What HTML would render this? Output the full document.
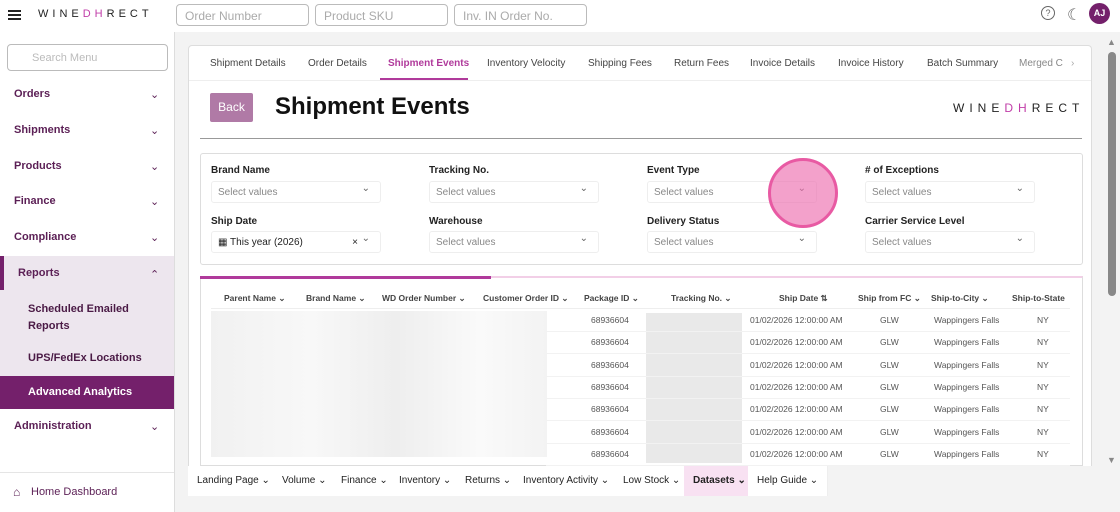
<!DOCTYPE html><html><head><style>
*{box-sizing:border-box;margin:0;padding:0}
body{width:1120px;height:512px;overflow:hidden;font-family:"Liberation Sans",sans-serif;background:#f3f3f3;position:relative;color:#333}
.a{position:absolute}
.top{left:0;top:0;width:1120px;height:32px;background:#fff}
.inp{top:4px;height:22px;border:1px solid #bbb;border-radius:4px;color:#aaa;font-size:12px;padding:4px 8px;width:133px}
.side{left:0;top:32px;width:175px;height:480px;background:#fff;border-right:1px solid #ddd}
.si{left:14px;font-size:11px;color:#5b1f55;font-weight:bold}
.chev{font-size:11px;color:#5b1f55;left:150px}
.card{left:188px;top:45px;width:904px;height:421px;background:#fff;border:1px solid #ddd;border-bottom:none;border-radius:4px 4px 0 0}
.tab{top:58px;font-size:10px;color:#444}
.lbl{font-size:10px;font-weight:bold;color:#222}
.sel{width:170px;height:22px;border:1px solid #eee;border-radius:3px;font-size:10px;color:#888;padding:5px 6px}
.sel:after{content:"⌄";position:absolute;right:10px;top:1px;font-size:10px;color:#666}
.th{top:293px;font-size:8.5px;font-weight:bold;color:#444}
.td{font-size:8.5px;color:#555}
.bt{top:466px;height:30px;background:#fff;font-size:10px;color:#222;padding:9px 9px;border-right:1px solid #eee}
</style></head><body>
<div class="a top"></div>
<div class="a" style="left:8px;top:10px;width:13px;height:2px;background:#222;box-shadow:0 4px #222,0 8px #222"></div>
<div class="a" style="left:38px;top:8px;font-size:11px;letter-spacing:4px;color:#222">WINE<span style="color:#c03da8">DH</span>RECT</div>
<div class="a inp" style="left:176px">Order Number</div>
<div class="a inp" style="left:315px">Product SKU</div>
<div class="a inp" style="left:454px">Inv. IN Order No.</div>
<div class="a" style="left:1041px;top:6px;width:14px;height:14px;border:1.5px solid #666;border-radius:50%;font-size:9px;text-align:center;color:#666;line-height:12px">?</div>
<div class="a" style="left:1067px;top:5px;font-size:16px;color:#666">☾</div>
<div class="a" style="left:1089px;top:3px;width:21px;height:21px;border-radius:50%;background:#74206b;color:#fff;font-size:9px;font-weight:bold;text-align:center;line-height:21px">AJ</div>
<div class="a side"></div>
<div class="a" style="left:7px;top:44px;width:161px;height:27px;border:1px solid #bbb;border-radius:4px;color:#bbb;font-size:11px;padding:7px 24px">Search Menu</div>
<div class="a si" style="top:88px">Orders</div><div class="a chev" style="top:88px">⌄</div>
<div class="a si" style="top:124px">Shipments</div><div class="a chev" style="top:124px">⌄</div>
<div class="a si" style="top:160px">Products</div><div class="a chev" style="top:160px">⌄</div>
<div class="a si" style="top:195px">Finance</div><div class="a chev" style="top:195px">⌄</div>
<div class="a si" style="top:231px">Compliance</div><div class="a chev" style="top:231px">⌄</div>
<div class="a" style="left:0;top:256px;width:174px;height:153px;background:#ede6ee"></div>
<div class="a" style="left:0;top:256px;width:4px;height:34px;background:#74206b"></div>
<div class="a si" style="top:267px;left:18px">Reports</div><div class="a chev" style="top:268px">⌃</div>
<div class="a si" style="top:301px;left:28px;line-height:17px;color:#4a1a45">Scheduled Emailed<br>Reports</div>
<div class="a si" style="top:352px;left:28px;color:#4a1a45">UPS/FedEx Locations</div>
<div class="a" style="left:0;top:376px;width:174px;height:33px;background:#74206b"></div>
<div class="a si" style="top:386px;left:28px;color:#fff">Advanced Analytics</div>
<div class="a si" style="top:420px">Administration</div><div class="a chev" style="top:420px">⌄</div>
<div class="a" style="left:0;top:472px;width:174px;height:1px;background:#e5e5e5"></div>
<div class="a" style="left:13px;top:485px;font-size:12px;color:#5b1f55">⌂</div>
<div class="a" style="left:31px;top:486px;font-size:11px;color:#5b1f55">Home Dashboard</div>
<div class="a card"></div>
<div class="a" style="left:189px;top:80px;width:902px;height:1px;background:#eee"></div>
<div class="a tab" style="left:210px">Shipment Details</div>
<div class="a tab" style="left:308px">Order Details</div>
<div class="a tab" style="left:388px;color:#b03a9b;font-weight:bold">Shipment Events</div>
<div class="a" style="left:380px;top:78px;width:88px;height:2px;background:#b03a9b"></div>
<div class="a tab" style="left:487px">Inventory Velocity</div>
<div class="a tab" style="left:588px">Shipping Fees</div>
<div class="a tab" style="left:674px">Return Fees</div>
<div class="a tab" style="left:750px">Invoice Details</div>
<div class="a tab" style="left:838px">Invoice History</div>
<div class="a tab" style="left:927px">Batch Summary</div>
<div class="a tab" style="left:1019px;color:#888">Merged C</div>
<div class="a tab" style="left:1071px;color:#aaa">›</div>
<div class="a" style="left:210px;top:93px;width:43px;height:29px;background:#b07aa6;border-radius:2px;color:#fff;font-size:12px;text-align:center;line-height:29px">Back</div>
<div class="a" style="left:275px;top:93px;font-size:24px;font-weight:bold;color:#111">Shipment Events</div>
<div class="a" style="left:953px;top:101px;font-size:12px;letter-spacing:5px;color:#222">WINE<span style="color:#c03da8">DH</span>RECT</div>
<div class="a" style="left:200px;top:138px;width:882px;height:1px;background:#999"></div>
<div class="a" style="left:200px;top:153px;width:883px;height:112px;border:1px solid #ddd;border-radius:3px"></div>
<div class="a lbl" style="left:211px;top:165px">Brand Name</div>
<div class="a lbl" style="left:429px;top:165px">Tracking No.</div>
<div class="a lbl" style="left:647px;top:165px">Event Type</div>
<div class="a lbl" style="left:865px;top:165px"># of Exceptions</div>
<div class="a lbl" style="left:211px;top:216px">Ship Date</div>
<div class="a lbl" style="left:429px;top:216px">Warehouse</div>
<div class="a lbl" style="left:647px;top:216px">Delivery Status</div>
<div class="a lbl" style="left:865px;top:216px">Carrier Service Level</div>
<div class="a sel" style="left:211px;top:181px">Select values</div>
<div class="a sel" style="left:429px;top:181px">Select values</div>
<div class="a sel" style="left:647px;top:181px">Select values</div>
<div class="a sel" style="left:865px;top:181px">Select values</div>
<div class="a sel" style="left:211px;top:231px;color:#222">▦ This year (2026)<span style="position:absolute;right:22px">×</span></div>
<div class="a sel" style="left:429px;top:231px">Select values</div>
<div class="a sel" style="left:647px;top:231px">Select values</div>
<div class="a sel" style="left:865px;top:231px">Select values</div>
<div class="a" style="left:768px;top:158px;width:70px;height:70px;border-radius:50%;background:rgba(236,110,175,.65);border:3px solid #e85aa3"></div>
<div class="a" style="left:200px;top:276px;width:883px;height:190px;background:#fff;border:1px solid #ddd;border-top:2px solid #f2cfe7"></div>
<div class="a" style="left:200px;top:276px;width:291px;height:3px;background:#b03a9b"></div>
<div class="a th" style="left:224px">Parent Name ⌄</div>
<div class="a th" style="left:306px">Brand Name ⌄</div>
<div class="a th" style="left:382px">WD Order Number ⌄</div>
<div class="a th" style="left:483px">Customer Order ID ⌄</div>
<div class="a th" style="left:584px">Package ID ⌄</div>
<div class="a th" style="left:671px">Tracking No. ⌄</div>
<div class="a th" style="left:779px">Ship Date ⇅</div>
<div class="a th" style="left:858px">Ship from FC ⌄</div>
<div class="a th" style="left:931px">Ship-to-City ⌄</div>
<div class="a th" style="left:1012px">Ship-to-State</div>
<div class="a" style="left:211px;top:308px;width:859px;height:1px;background:#eee"></div>
<div class="a" style="left:211px;top:311px;width:336px;height:146px;background:linear-gradient(90deg,#f1f1f1,#f8f8f8 30%,#eee 55%,#fafafa 80%,#f3f3f3)"></div>
<div class="a" style="left:646px;top:313px;width:96px;height:150px;background:#e9e9e9"></div>
<div class="a" id="rows"></div>
<script>
var ys=[320,342,365,387,409,432,454],h="";
ys.forEach(function(y){h+='<div class="a td" style="left:591px;top:'+(y-5)+'px">68936604</div><div class="a td" style="left:750px;top:'+(y-5)+'px">01/02/2026 12:00:00 AM</div><div class="a td" style="left:880px;top:'+(y-5)+'px">GLW</div><div class="a td" style="left:934px;top:'+(y-5)+'px">Wappingers Falls</div><div class="a td" style="left:1037px;top:'+(y-5)+'px">NY</div><div class="a" style="left:546px;top:'+(y+11)+'px;width:524px;height:1px;background:#f2f2f2"></div>';});
document.getElementById("rows").outerHTML=h;
</script>
<div class="a" style="left:1108px;top:52px;width:8px;height:244px;background:#888;border-radius:4px"></div>
<div class="a" style="left:1107px;top:37px;font-size:9px;color:#888">▲</div>
<div class="a" style="left:1107px;top:455px;font-size:9px;color:#888">▼</div>
<div class="a bt" style="left:188px">Landing Page ⌄</div>
<div class="a bt" style="left:273px">Volume ⌄</div>
<div class="a bt" style="left:332px">Finance ⌄</div>
<div class="a bt" style="left:390px">Inventory ⌄</div>
<div class="a bt" style="left:456px">Returns ⌄</div>
<div class="a bt" style="left:514px">Inventory Activity ⌄</div>
<div class="a bt" style="left:614px">Low Stock ⌄</div>
<div class="a bt" style="left:684px;background:#f8e1f2;font-weight:bold">Datasets ⌄</div>
<div class="a bt" style="left:748px">Help Guide ⌄</div>
</body></html>
